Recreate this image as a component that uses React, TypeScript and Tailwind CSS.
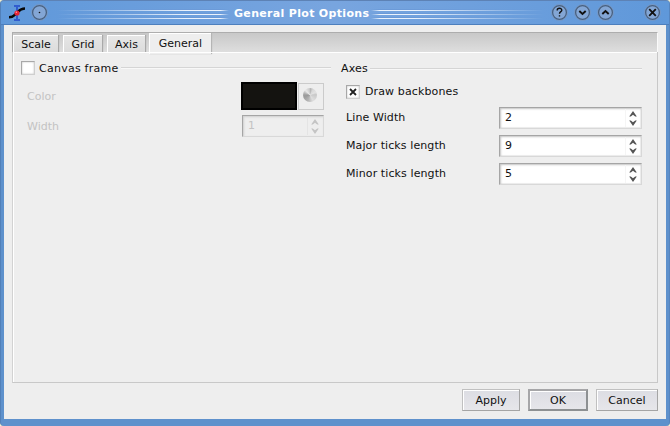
import React from 'react';

function TitleLines({ className }: { className: string }) {
  return (
    <div className={`flex h-[10px] flex-col gap-[2px] ${className}`}>
      {[0, 1, 2].map((i) => (
        <div key={i} className="h-[2px] border-b border-[#eaf2fc] bg-[#6b9ad8]" />
      ))}
    </div>
  );
}

function RoundButton({ children }: { children: React.ReactNode }) {
  return (
    <svg width="17" height="17" viewBox="0 0 17 17" className="shrink-0" fill="none">
      <circle cx="8.5" cy="8.5" r="8" fill="#7fa3d2" stroke="#7396c5" />
      <circle cx="8.5" cy="8.5" r="6.9" fill="#83a6d5" stroke="#48607f" strokeWidth="1.3" />
      {children}
    </svg>
  );
}

function Arrows({ color }: { color: string }) {
  return (
    <svg width="8" height="15" viewBox="0 0 8 15" className="shrink-0" fill={color}>
      <path d="M4 0 L7.8 5.6 L6.2 5.6 L4 3.8 L1.8 5.6 L.2 5.6Z" />
      <path d="M4 15 L7.8 9.4 L6.2 9.4 L4 11.2 L1.8 9.4 L.2 9.4Z" />
    </svg>
  );
}

function Spin({ value, disabled = false, className }: { value: string; disabled?: boolean; className: string }) {
  return (
    <div
      className={`flex h-[22px] items-center justify-between border border-t-[#a5a5a5] border-l-[#a5a5a5] border-r-[#d8d8d8] border-b-[#d8d8d8] pl-[5px] ${
        disabled
          ? 'bg-[#eeeeee] pr-[4px] text-[#c3c3c3] shadow-[inset_1px_1px_2px_#cfcfcf]'
          : 'bg-white pr-[4px] text-[#111] shadow-[inset_1px_1px_2px_#c4c4c4,inset_-1px_-1px_1px_#eee]'
      } ${className}`}
    >
      <span>{value}</span>
      <div className={`flex h-[18px] items-center border-l pl-[3px] ${disabled ? 'border-[#e4e4e4]' : 'border-[#f5f5f5]'}`}>
        <Arrows color={disabled ? '#c4c4c4' : '#555555'} />
      </div>
    </div>
  );
}

function Check({ checked = false }: { checked?: boolean }) {
  return (
    <div className="flex h-[14px] w-[14px] shrink-0 items-center justify-center border border-t-[#a8a8a8] border-l-[#a8a8a8] border-r-[#cfcfcf] border-b-[#cfcfcf] bg-white shadow-[inset_0_0_2px_#bbb]">
      {checked && (
        <svg width="8" height="8" viewBox="0 0 8 8" stroke="#222" strokeWidth="1.8">
          <path d="M1 1 L7 7 M7 1 L1 7" />
        </svg>
      )}
    </div>
  );
}

function Tab({ label, className }: { label: string; className: string }) {
  return (
    <div
      className={`mt-[2px] flex h-[17px] items-center justify-center border-t border-l border-t-white border-l-white bg-gradient-to-b from-[#e6e6e6] to-[#dcdcdc] pt-[2px] shadow-[1px_0_1px_#a9a9a9] ${className}`}
    >
      {label}
    </div>
  );
}

function AxisRow({ label, value }: { label: string; value: string }) {
  return (
    <div className="flex h-[28px] items-start justify-between">
      <span className="pt-[4px] tracking-[0.1px]">{label}</span>
      <Spin value={value} className="w-[143px]" />
    </div>
  );
}

export default function App() {
  return (
    <div className="h-[426px] w-[670px] bg-[#f4f0d0]">
      <div className="flex h-[426px] w-[670px] flex-col overflow-hidden rounded-[4px] border-t border-r border-l border-t-[#5d82b5] border-r-[#5685bf] border-l-[#5280b9] bg-[#5e91cc] font-['DejaVu_Sans',sans-serif] text-[11px] leading-[14px] text-[#111]">
        <div className="flex h-[24px] shrink-0 items-center border-b border-b-[#4d7fbd] bg-gradient-to-r from-[#5f98da] via-[#78a5df] to-[#5f98da] pl-[8px] pr-[8px]">
          <svg width="17" height="16" viewBox="0 0 17 16" fill="none" className="shrink-0">
            <path d="M5 1H11M8 1V15M5 15H11" stroke="#315cce" strokeWidth="2" />
            <path d="M0 12.3C4.5 12.3 5 10.5 7.5 8.2S11 3.5 16 3.5" stroke="#080808" strokeWidth="2.4" />
            <circle cx="8" cy="8" r="2.6" fill="#e62335" />
            <circle cx="7.4" cy="7.2" r=".8" fill="#ff9a9a" />
          </svg>
          <div className="ml-[5px] flex">
            <RoundButton>
              <circle cx="8.5" cy="8.5" r=".8" fill="#111" />
            </RoundButton>
          </div>
          <TitleLines className="ml-[9px] mt-[3px] w-[172px] [mask-image:linear-gradient(to_right,transparent,black_75%,black_95%,transparent)]" />
          <div className="ml-[5px] w-[134px] whitespace-nowrap pt-[2px] text-[11px] font-bold tracking-[0.32px] text-white">General Plot Options</div>
          <TitleLines className="ml-[3px] mt-[3px] w-[173px] [mask-image:linear-gradient(to_right,transparent,black_5%,black_25%,transparent)]" />
          <div className="ml-[7px] flex gap-[6px]">
            <RoundButton>
              <path d="M6.2 6.4C6.2 3.6 10.8 3.6 10.8 6.2C10.8 7.7 8.5 7.7 8.5 9.8M8.5 11.2V12.6" stroke="#111" strokeWidth="1.4" />
            </RoundButton>
            <RoundButton>
              <path d="M5.3 7L8.5 10L11.7 7" stroke="#111" strokeWidth="1.9" />
            </RoundButton>
            <RoundButton>
              <path d="M5.3 10L8.5 7L11.7 10" stroke="#111" strokeWidth="1.9" />
            </RoundButton>
          </div>
          <div className="ml-auto flex">
            <RoundButton>
              <path d="M5.2 5.2L11.8 11.8M11.8 5.2L5.2 11.8" stroke="#111" strokeWidth="1.8" />
            </RoundButton>
          </div>
        </div>

        <div className="mx-[3px] flex h-[394px] shrink-0 flex-col bg-[#eeeeee] px-[8px] pt-[7px]">
          <div className="flex h-[20px] w-[646px] shrink-0 border-t border-r border-l border-t-[#adadad] border-r-[#fafafa] border-l-[#adadad] bg-gradient-to-b from-[#c8c8c8] to-[#dedede]">
            <Tab label="Scale" className="w-[45px]" />
            <Tab label="Grid" className="ml-[5px] w-[39px]" />
            <Tab label="Axis" className="ml-[5px] w-[38px]" />
            <div className="ml-[4px] flex h-[21px] w-[62px] shrink-0 items-center justify-center border-t border-l border-t-white border-l-white bg-[#eeeeee] shadow-[1px_0_1px_#b5b5b5]">
              General
            </div>
          </div>
          <div className="flex h-[331px] w-[646px] shrink-0 border border-t-0 border-l-[#d2d2d2] border-r-[#c8c8c8] border-b-[#c8c8c8]">
            <div className="w-[318px] shrink-0 border-l border-t border-white pl-[7px] pt-[8px]">
              <div className="flex h-[14px] items-start">
                <Check />
                <span className="ml-[4px] whitespace-nowrap pt-px tracking-[0.25px]">Canvas frame</span>
                <div className="mt-[6px] ml-[2px] h-[2px] grow border-t border-b border-t-[#d5d5d5] border-b-[#f8f8f8]" />
              </div>
              <div className="mt-[7px] flex h-[28px] items-center pl-[6px] text-[#c3c3c3]">
                <span className="w-[214px] pt-px">Color</span>
                <div className="h-[28px] w-[56px] shrink-0 border-2 border-black bg-[#141310]" />
                <div className="ml-[1px] flex h-[27px] w-[26px] shrink-0 items-center justify-center border border-[#cbcbcb] bg-[#eeeeee] pr-[2px] pb-[2px]">
                  <div className="h-[14px] w-[14px] rounded-full bg-[conic-gradient(#b0b0b0,#d8d8d8_8%,#e2e2e2_18%,#c8c8c8_24%,#dedede_42%,#b5b5b5_55%,#999_72%,#a9a9a9_78%,#e8e8e8_88%,#c5c5c5)]" />
                </div>
              </div>
              <div className="mt-[5px] flex h-[22px] items-center pl-[6px] text-[#c3c3c3]">
                <span className="w-[215px] pt-px">Width</span>
                <Spin value="1" disabled className="w-[82px]" />
              </div>
            </div>
            <div className="grow border-t border-t-white pl-[10px] pr-[15px] pt-[8px]">
              <div className="flex items-center">
                <span className="pt-px tracking-[0.2px]">Axes</span>
                <div className="ml-[2px] h-[2px] grow border-t border-b border-t-[#d5d5d5] border-b-[#f8f8f8]" />
              </div>
              <div className="mt-[8px] flex items-center pl-[5px]">
                <Check checked />
                <span className="ml-[5px] pt-px tracking-[0.12px]">Draw backbones</span>
              </div>
              <div className="mt-[8px] pl-[5px]">
                <AxisRow label="Line Width" value="2" />
                <AxisRow label="Major ticks length" value="9" />
                <AxisRow label="Minor ticks length" value="5" />
              </div>
            </div>
          </div>
          <div className="mt-[6px] flex h-[22px] items-center justify-end gap-[8px]">
            <div className="flex h-[22px] w-[58px] items-center justify-center border border-t-[#c0c0c0] border-l-[#c0c0c0] border-r-[#a5a5a5] border-b-[#a5a5a5] bg-gradient-to-b from-[#dcdde3] to-[#e6e6ea] pt-px shadow-[inset_1px_1px_0_white]">Apply</div>
            <div className="flex h-[22px] w-[60px] items-center justify-center border-2 border-t-[#a6a6a8] border-l-[#a6a6a8] border-r-[#8d9092] border-b-[#8d9092] bg-gradient-to-b from-[#dcdde3] to-[#e6e6ea] pt-px shadow-[inset_1px_1px_0_white]">OK</div>
            <div className="flex h-[22px] w-[62px] items-center justify-center border border-t-[#c0c0c0] border-l-[#c0c0c0] border-r-[#a5a5a5] border-b-[#a5a5a5] bg-gradient-to-b from-[#dcdde3] to-[#e6e6ea] pt-px shadow-[inset_1px_1px_0_white]">Cancel</div>
          </div>
        </div>
      </div>
    </div>
  );
}
